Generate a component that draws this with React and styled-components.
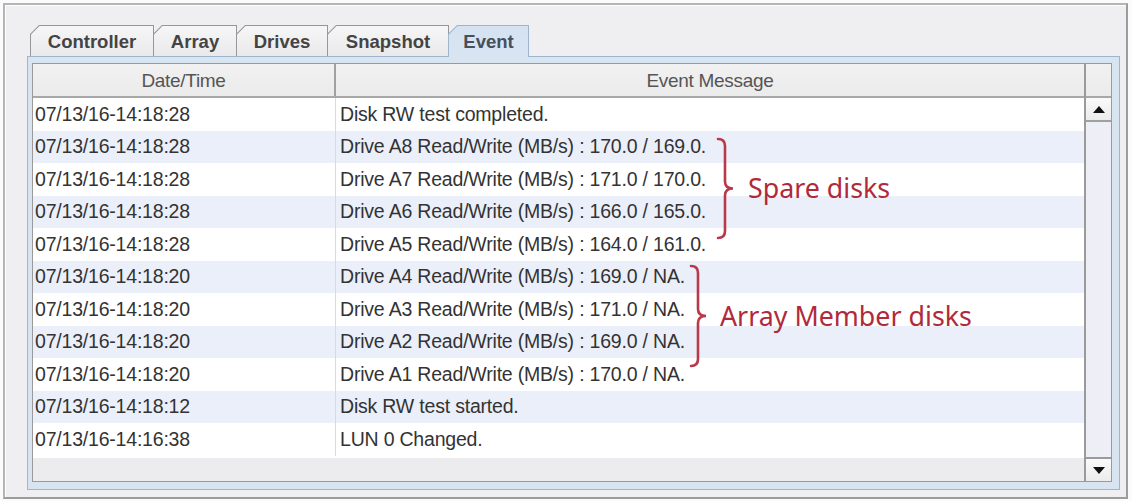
import React from "react";
import styled, { createGlobalStyle } from "styled-components";

const GlobalStyle = createGlobalStyle`
    html, body {
        margin: 0;
        padding: 0;
        background: #ffffff;
    }
    body {
        font-family: "Liberation Sans", Arial, sans-serif;
    }
`;

const tabs = [
    { label: "Controller", width: 124 },
    { label: "Array", width: 84 },
    { label: "Drives", width: 92 },
    { label: "Snapshot", width: 122 },
    { label: "Event", width: 81, active: true },
];

const events = [
    ["07/13/16-14:18:28", "Disk RW test completed."],
    ["07/13/16-14:18:28", "Drive A8 Read/Write (MB/s) : 170.0 / 169.0."],
    ["07/13/16-14:18:28", "Drive A7 Read/Write (MB/s) : 171.0 / 170.0."],
    ["07/13/16-14:18:28", "Drive A6 Read/Write (MB/s) : 166.0 / 165.0."],
    ["07/13/16-14:18:28", "Drive A5 Read/Write (MB/s) : 164.0 / 161.0."],
    ["07/13/16-14:18:20", "Drive A4 Read/Write (MB/s) : 169.0 / NA."],
    ["07/13/16-14:18:20", "Drive A3 Read/Write (MB/s) : 171.0 / NA."],
    ["07/13/16-14:18:20", "Drive A2 Read/Write (MB/s) : 169.0 / NA."],
    ["07/13/16-14:18:20", "Drive A1 Read/Write (MB/s) : 170.0 / NA."],
    ["07/13/16-14:18:12", "Disk RW test started."],
    ["07/13/16-14:16:38", "LUN 0 Changed."],
];

const notes = [
    { label: "Spare disks", x: 716, y: 137, h: 103, textX: 748 },
    { label: "Array Member disks", x: 689, y: 264, h: 104, textX: 720 },
];

const Brace = ({ h }) => (
    <svg width="20" height={h} viewBox={`0 0 20 ${h}`}>
        <path
            d={`M2 2 Q9 2 9 9 L9 ${h / 2 - 7} Q9 ${h / 2} 17 ${h / 2} Q9 ${h / 2} 9 ${h / 2 + 7} L9 ${h - 9} Q9 ${h - 2} 2 ${h - 2}`}
            fill="none"
            stroke="#b8394a"
            strokeWidth="2.6"
            strokeLinecap="round"
        />
    </svg>
);

const Arrow = ({ up }) => (
    <svg width="12" height="7" viewBox="0 0 12 7">
        <path d={up ? "M0 7 L6 0 L12 7 Z" : "M0 0 L12 0 L6 7 Z"} fill="#111" />
    </svg>
);

const App = () => {
    return (
        <Page>
            <GlobalStyle />
            <Frame>
                <TabRow>
                    {tabs.map((tab) => (
                        <TabOuter key={tab.label} $w={tab.width} $active={tab.active}>
                            <TabInner $active={tab.active}>{tab.label}</TabInner>
                        </TabOuter>
                    ))}
                </TabRow>
                <Panel>
                    <ScrollPane>
                        <TableArea>
                            <HeaderRow>
                                <HeadCell $first>Date/Time</HeadCell>
                                <HeadCell>Event Message</HeadCell>
                            </HeaderRow>
                            <Body>
                                {events.map(([time, msg], i) => (
                                    <Row key={i} $alt={i % 2 === 1}>
                                        <Cell $first>{time}</Cell>
                                        <Cell>{msg}</Cell>
                                    </Row>
                                ))}
                                <Filler />
                            </Body>
                        </TableArea>
                        <ScrollBar>
                            <Corner />
                            <ArrowButton>
                                <Arrow up />
                            </ArrowButton>
                            <Track />
                            <ArrowButton $bottom>
                                <Arrow />
                            </ArrowButton>
                        </ScrollBar>
                    </ScrollPane>
                </Panel>
            </Frame>
            {notes.map((n) => (
                <Note key={n.label} style={{ left: n.x, top: n.y }}>
                    <Brace h={n.h} />
                    <NoteText style={{ marginLeft: n.textX - n.x - 20 }}>{n.label}</NoteText>
                </Note>
            ))}
        </Page>
    );
};

const Page = styled.div`
    position: relative;
    width: 1132px;
    height: 501px;
    padding: 3px 4px 2px 3px;
    box-sizing: border-box;
    background: #fbfbfb;
`;

const Frame = styled.div`
    box-sizing: border-box;
    height: 496px;
    border: 2px solid #b4b4b4;
    border-right-color: #9c9c9c;
    border-bottom-color: #9c9c9c;
    box-shadow: inset 1px 1px 0 #ffffff;
    background: #efeef1;
    padding: 20px 6px 7px 22px;
    display: flex;
    flex-direction: column;
`;

const TabRow = styled.div`
    display: flex;
    height: 32px;
    padding-left: 3px;
    align-items: flex-end;
`;

const TabOuter = styled.div`
    width: ${(p) => p.$w}px;
    height: 32px;
    padding: 1px 1px 0 1px;
    box-sizing: border-box;
    background: ${(p) => (p.$active ? "#9fb5cf" : "#979797")};
    clip-path: polygon(9px 0, 100% 0, 100% 100%, 0 100%, 0 9px);
    margin-right: -1px;
    position: relative;
    z-index: ${(p) => (p.$active ? 2 : 1)};
`;

const TabInner = styled.div`
    height: 100%;
    box-sizing: border-box;
    clip-path: polygon(8.5px 0, 100% 0, 100% 100%, 0 100%, 0 8.5px);
    background: ${(p) =>
        p.$active
            ? "linear-gradient(#d4e2f1, #d9e5f2)"
            : "linear-gradient(#f6f6f7, #e9e9eb)"};
    display: flex;
    align-items: center;
    justify-content: center;
    padding-top: 1px;
    font-family: "Liberation Sans", Arial, sans-serif;
    font-weight: bold;
    font-size: 18.5px;
    color: ${(p) => (p.$active ? "#46505c" : "#444444")};
`;

const Panel = styled.div`
    flex: 1;
    display: flex;
    border: 1px solid #9fb5cf;
    background: #d9e4f1;
    padding: 6px 7px 7px 4px;
    position: relative;
    z-index: 1;
    margin-top: -1px;
`;

const ScrollPane = styled.div`
    flex: 1;
    display: flex;
    border: 1px solid #9a9a9a;
    background: #ffffff;
`;

const TableArea = styled.div`
    flex: 1;
    display: flex;
    flex-direction: column;
`;

const HeaderRow = styled.div`
    display: flex;
    height: 34px;
    box-sizing: border-box;
    background: linear-gradient(#f1f1f1, #ebebeb);
    border-bottom: 2px solid #a8a8a8;
`;

const HeadCell = styled.div`
    box-sizing: border-box;
    width: ${(p) => (p.$first ? "303px" : "auto")};
    flex: ${(p) => (p.$first ? "none" : "1")};
    border-right: ${(p) => (p.$first ? "2px solid #a0a0a0" : "none")};
    display: flex;
    align-items: center;
    justify-content: center;
    font-size: 19px;
    letter-spacing: -0.3px;
    color: #555555;
    padding-top: 2px;
`;

const Body = styled.div`
    flex: 1;
    display: flex;
    flex-direction: column;
`;

const Row = styled.div`
    display: flex;
    height: 32.5px;
    background: ${(p) => (p.$alt ? "#ebeff9" : "#ffffff")};
`;

const Cell = styled.div`
    box-sizing: border-box;
    width: ${(p) => (p.$first ? "303px" : "auto")};
    flex: ${(p) => (p.$first ? "none" : "1")};
    border-right: ${(p) => (p.$first ? "1px solid #dadada" : "none")};
    padding-left: ${(p) => (p.$first ? "2px" : "4px")};
    display: flex;
    align-items: center;
    font-size: 19.5px;
    letter-spacing: -0.2px;
    color: #333333;
    white-space: nowrap;
`;

const Filler = styled.div`
    flex: 1;
    background: linear-gradient(#ffffff 0, #ffffff 2px, #ececee 2px);
`;

const ScrollBar = styled.div`
    width: 25px;
    display: flex;
    flex-direction: column;
    border-left: 2px solid #9a9a9a;
    background: #efeff6;
`;

const Corner = styled.div`
    height: 34px;
    box-sizing: border-box;
    background: linear-gradient(#f1f1f1, #ebebeb);
    border-bottom: 2px solid #a8a8a8;
`;

const ArrowButton = styled.div`
    height: 24px;
    box-sizing: border-box;
    display: flex;
    align-items: center;
    justify-content: center;
    background: linear-gradient(#fafafa, #ececec);
    border-top: ${(p) => (p.$bottom ? "2px solid #9a9a9a" : "none")};
    border-bottom: ${(p) => (p.$bottom ? "none" : "2px solid #a0a0a0")};
`;

const Track = styled.div`
    flex: 1;
    background: #eeeef7;
`;

const Note = styled.div`
    position: absolute;
    z-index: 5;
    display: flex;
    align-items: center;
`;

const NoteText = styled.span`
    font-family: "Noto Sans", "Open Sans", sans-serif;
    font-size: 26.8px;
    color: #b02a3c;
    white-space: nowrap;
    line-height: 1;
`;

export default App;
